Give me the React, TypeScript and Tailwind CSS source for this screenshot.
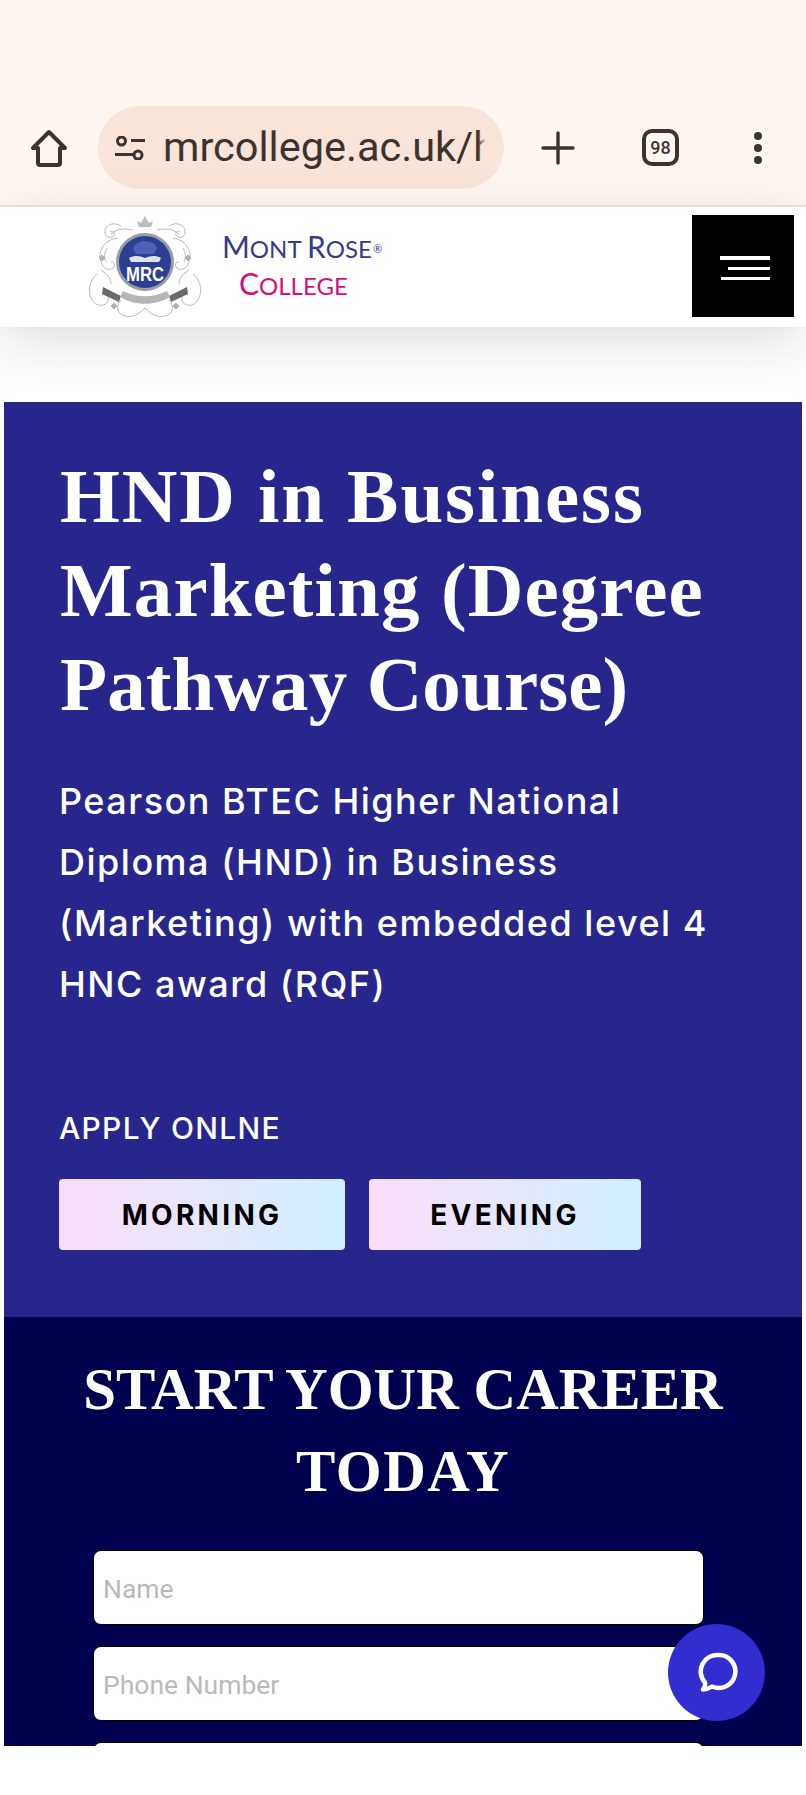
const serif = "font-['Liberation_Serif',serif]";
const body = "font-['Inter',sans-serif]";

function Logo() {
  return (
    <svg width="116" height="106" viewBox="0 0 116 106" fill="none">
      <g stroke="#b0b0b0" strokeWidth="0.9">
        <g>
          <path d="M30 24c-12 2-20 12-16 24 2 7 8 9 12 6 3-3 1-7-2-6" />
          <path d="M34 12c-8-5-17-1-16 7 1 5 7 6 9 2 1-3-2-5-4-3" />
          <path d="M10 60C0 68 0 84 9 90c8 4 14-2 12-8-1-3-5-3-6 0" />
          <path d="M34 86c-6 6-4 14 4 16 8 2 14-2 20-8" />
          <path d="M24 20c6-5 12-6 22-4M20 34c-3 5-3 10-1 14M14 56c6 4 10 8 10 14" />
          <path d="M12 44l3-3 3 3-3 3zM24 92l3-3 3 3-3 3z" fill="#b0b0b0" />
        </g>
        <g transform="translate(116 0) scale(-1 1)">
          <path d="M30 24c-12 2-20 12-16 24 2 7 8 9 12 6 3-3 1-7-2-6" />
          <path d="M34 12c-8-5-17-1-16 7 1 5 7 6 9 2 1-3-2-5-4-3" />
          <path d="M10 60C0 68 0 84 9 90c8 4 14-2 12-8-1-3-5-3-6 0" />
          <path d="M34 86c-6 6-4 14 4 16 8 2 14-2 20-8" />
          <path d="M24 20c6-5 12-6 22-4M20 34c-3 5-3 10-1 14M14 56c6 4 10 8 10 14" />
          <path d="M12 44l3-3 3 3-3 3zM24 92l3-3 3 3-3 3z" fill="#b0b0b0" />
        </g>
      </g>
      <path d="M52 13l-2-6 4 2 4-7 4 7 4-2-2 6z" fill="#bdbdbd" />
      <path d="M16 73l18 9-2 6-17-8zM100 73 82 82l2 6 17-8z" fill="#6a6a6a" />
      <path d="M33 83c15 9 35 9 50 0l-3-6c-14 7-30 7-44 0z" fill="#b5b5b5" />
      <circle cx="58" cy="48" r="29" fill="#9a9da6" />
      <circle cx="58" cy="48" r="26" fill="#2c3f92" />
      <path d="M46 34c3-9 21-9 24 0l-3 6H49z" fill="#4d62b3" />
      <path d="M42 44c6-3 11-2 16 0 5-2 10-3 16 0l-2 4H44z" fill="#dfe3ee" />
      <text x="58" y="67" textAnchor="middle" fill="#fff" fontSize="20" fontWeight="700" fontFamily="Liberation Sans, sans-serif" textLength="38" lengthAdjust="spacingAndGlyphs">MRC</text>
    </svg>
  );
}

function BrowserBar() {
  return (
    <div className="flex h-[207px] items-end border-b-2 border-[#f8e3d8] bg-[#fff6f2] pb-[16px]">
      <div className="flex h-[83px] w-full items-center">
        <svg className="ml-[30px] shrink-0" width="38" height="38" viewBox="0 0 38 38" fill="none" stroke="#3c3330" strokeWidth="4" strokeLinejoin="round">
          <path d="M19 3 3 19h5v15a2 2 0 0 0 2 2h18a2 2 0 0 0 2-2V19h5z" />
        </svg>
        <div className="relative ml-[30px] flex h-[83px] w-[406px] shrink-0 items-center overflow-hidden rounded-full bg-[#f9e4d9]">
          <svg className="ml-[17px] shrink-0" width="30" height="24" viewBox="0 0 30 24" fill="none" stroke="#3c3330" strokeWidth="3">
            <circle cx="6.5" cy="5" r="4" />
            <path d="M16 4.5h14M0 18.5h18" />
            <circle cx="23" cy="19" r="4" />
          </svg>
          <span className="ml-[18px] block w-[322px] overflow-hidden whitespace-nowrap font-['Roboto',sans-serif] text-[41.5px] text-[#3c3330]">mrcollege.ac.uk/h</span>
          <div className="absolute right-[18px] top-0 h-full w-[8px] bg-gradient-to-r from-transparent to-[#f9e4d9]" />
        </div>
        <svg className="ml-[37px] shrink-0" width="34" height="34" viewBox="0 0 34 34" stroke="#3c3330" strokeWidth="3.4" strokeLinecap="round">
          <path d="M17 2v30M2 17h30" />
        </svg>
        <div className="ml-[67px] flex h-[37px] w-[37px] shrink-0 items-center justify-center rounded-[10px] border-[4px] border-[#3c3330] font-['Roboto',sans-serif] text-[18px] font-medium text-[#3c3330]">98</div>
        <div className="ml-[75px] flex shrink-0 flex-col gap-[4px]">
          <div className="h-[8px] w-[8px] rounded-full bg-[#3c3330]" />
          <div className="h-[8px] w-[8px] rounded-full bg-[#3c3330]" />
          <div className="h-[8px] w-[8px] rounded-full bg-[#3c3330]" />
        </div>
      </div>
    </div>
  );
}

function SiteHeader() {
  return (
    <div className="relative flex h-[120px] items-center bg-white pr-[12px] shadow-[0_14px_56px_rgba(0,0,0,0.14)]">
      <div className="ml-[87px]">
        <Logo />
      </div>
      <div className="mb-[5px] ml-[19px] font-['Lato',sans-serif] leading-none">
        <div className="whitespace-nowrap text-[#353c86]">
          <span className="text-[30px]">M</span><span className="text-[24px]">ONT </span>
          <span className="text-[30px]">R</span><span className="text-[24px]">OSE</span>
          <sup className="ml-[1px] text-[11px]">®</sup>
        </div>
        <div className="mt-[7px] pl-[17px] text-[#d4107f]">
          <span className="text-[30px]">C</span><span className="text-[24px]">OLLEGE</span>
        </div>
      </div>
      <div className="mb-[2px] ml-auto flex h-[102px] w-[102px] flex-col items-end justify-center gap-[7px] bg-black pr-[24px] pt-[4px]">
        <div className="h-[4px] w-[50px] bg-white" />
        <div className="h-[3px] w-[42px] bg-white" />
        <div className="h-[3px] w-[49px] bg-white" />
      </div>
    </div>
  );
}

function Hero() {
  return (
    <div className="mx-[4px] h-[915px] bg-[#28268c] pl-[55px] pt-[47px] text-white">
      <h1 className={`${serif} ml-[1px] text-[77px] font-bold leading-[94px]`}>
        <span className="tracking-[1.9px]">HND in Business</span>
        <br />
        <span className="tracking-[1.1px]">Marketing (Degree</span>
        <br />
        <span className="tracking-[0.1px]">Pathway Course)</span>
      </h1>
      <p className={`${body} mt-[40px] text-[36px] font-medium leading-[61px] tracking-[1.5px]`}>
        Pearson BTEC Higher National
        <br />
        Diploma (HND) in Business
        <br />
        (Marketing) with embedded level 4
        <br />
        HNC award (RQF)
      </p>
      <div className={`${body} mt-[93px] text-[30px] font-medium leading-[40px] tracking-[1.3px]`}>APPLY ONLNE</div>
      <div className="mt-[31px] flex gap-[24px]">
        <ShiftButton label="MORNING" width="w-[286px]" />
        <ShiftButton label="EVENING" width="w-[272px]" />
      </div>
    </div>
  );
}

function ShiftButton({ label, width }: { label: string; width: string }) {
  return (
    <div className={`${width} ${body} flex h-[71px] items-center justify-center rounded-[4px] bg-gradient-to-r from-[#fbdefc] to-[#cfeffe] text-[28px] font-bold tracking-[3.3px] text-black`}>
      {label}
    </div>
  );
}

function Field({ placeholder }: { placeholder: string }) {
  return (
    <input
      placeholder={placeholder}
      className="h-[75px] w-[611px] shrink-0 rounded-[8px] border border-black bg-white pl-[9px] pt-[2px] font-['Roboto',sans-serif] text-[26.5px] placeholder:text-[#b9b9b9]"
    />
  );
}

function Career() {
  return (
    <div className="mx-[4px] flex h-[429px] flex-col overflow-hidden bg-[#00004f] pt-[31px] text-white">
      <h2 className={`${serif} text-center text-[59px] font-bold leading-[82px]`}>
        START YOUR CAREER
        <br />
        <span className="tracking-[1.5px]">TODAY</span>
      </h2>
      <div className="ml-[89px] mt-[38px] flex flex-col gap-[21px]">
        <Field placeholder="Name" />
        <Field placeholder="Phone Number" />
        <Field placeholder="" />
      </div>
    </div>
  );
}

export default function App() {
  return (
    <div className="relative h-[1795px] overflow-hidden bg-white">
      <BrowserBar />
      <SiteHeader />
      <div className="h-[75px]" />
      <Hero />
      <Career />
      <div className="absolute left-[668px] top-[1624px] flex h-[97px] w-[97px] items-center justify-center rounded-full bg-[#332dd0]">
        <svg width="44" height="44" viewBox="0 0 44 44" fill="none" stroke="#fff" strokeWidth="4.5" strokeLinejoin="round" strokeLinecap="round">
          <path d="M24 4a16.5 16.5 0 1 1-7 31.5c-3 2-6 3-9 3 1.5-2 2.5-5 2-7A16.5 16.5 0 0 1 24 4z" />
        </svg>
      </div>
    </div>
  );
}
